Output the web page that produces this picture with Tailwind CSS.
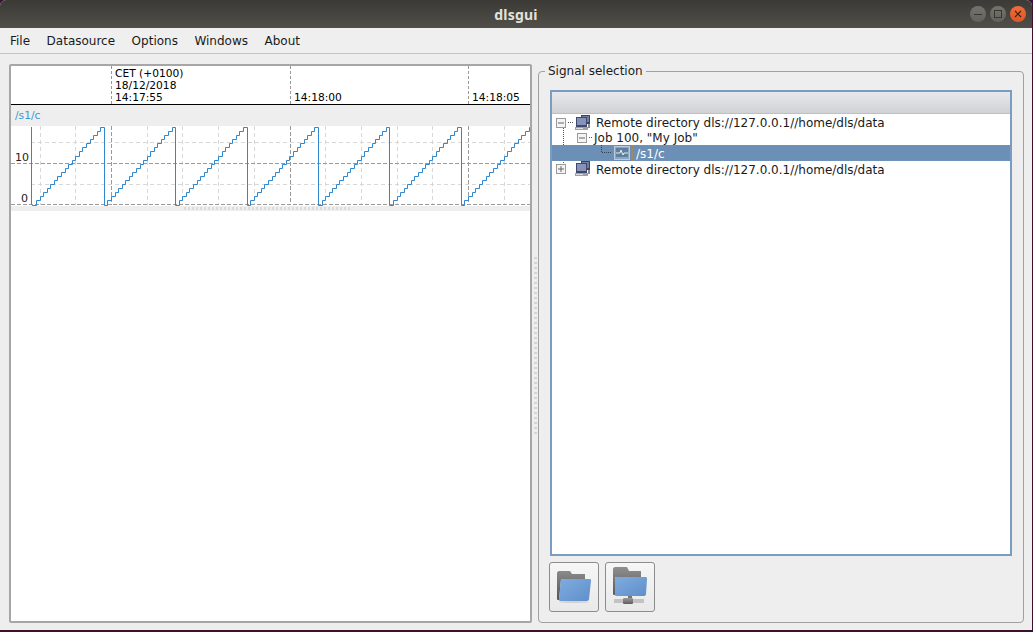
<!DOCTYPE html>
<html lang="en">
<head>
    <meta charset="UTF-8">
    <title>dlsgui</title>
    <script src="https://cdn.jsdelivr.net/npm/@tailwindcss/browser@4"></script>
</head>
<body class="bg-[#3a1230] w-[1033px] h-[632px] overflow-hidden font-['DejaVu_Sans',sans-serif] text-[12px] text-[#1a1a1a]">
    <div class="w-[1032px] h-[630px] flex flex-col bg-[#eeeeee] rounded-t-[6px] overflow-hidden">
        <!-- Title bar -->
        <div class="relative h-[28px] shrink-0 flex items-center justify-center bg-gradient-to-b from-[#3b3a36] to-[#504f49]">
            <span class="font-['Noto_Sans',sans-serif] font-bold text-[14px] tracking-[0.2px] text-[#e4e2dc]">dlsgui</span>
            <div class="absolute right-[6px] top-[6px] flex gap-[4px]">
                <div class="w-[16px] h-[16px] rounded-full bg-gradient-to-b from-[#74736e] to-[#62615c] flex items-center justify-center">
                    <div class="w-[8px] h-[1px] bg-[#38372f]"></div>
                </div>
                <div class="w-[16px] h-[16px] rounded-full bg-gradient-to-b from-[#74736e] to-[#62615c] flex items-center justify-center">
                    <div class="w-[8px] h-[8px] border border-[#38372f]"></div>
                </div>
                <div class="w-[16px] h-[16px] rounded-full bg-gradient-to-b from-[#ef6d3a] to-[#dd5526] flex items-center justify-center">
                    <svg width="8" height="8" viewBox="0 0 8 8"><path d="M1 1L7 7M7 1L1 7" stroke="#3b2416" stroke-width="1.2"/></svg>
                </div>
            </div>
        </div>

        <!-- Menu bar -->
        <div class="h-[26px] shrink-0 flex items-center pl-[10px] gap-[16.5px] border-b border-[#c4c4c4] bg-[#efefef]">
            <span>File</span>
            <span>Datasource</span>
            <span>Options</span>
            <span>Windows</span>
            <span>About</span>
        </div>

        <div class="flex-1 flex pl-[9px] pt-[10px] pb-[7px] min-h-0">
            <!-- Graph panel -->
            <div class="w-[523px] flex flex-col bg-white border-2 border-[#a6a6a6] rounded-[2px]">
                <div class="relative h-[39px] shrink-0 border-b border-black text-[10.67px] leading-[12px] text-black">
                    <div class="absolute left-[100px] top-0 bottom-0 border-l border-dashed border-[#999999]"></div>
                    <div class="absolute left-[279px] top-0 bottom-0 border-l border-dashed border-[#999999]"></div>
                    <div class="absolute left-[457px] top-0 bottom-0 border-l border-dashed border-[#999999]"></div>
                    <div class="absolute left-[104px] top-[1.5px]">CET (+0100)<br>18/12/2018<br>14:17:55</div>
                    <div class="absolute left-[283px] top-[25.5px]">14:18:00</div>
                    <div class="absolute left-[461px] top-[25.5px]">14:18:05</div>
                </div>
                <div class="h-[21px] shrink-0 bg-[#eeeeee] pl-[4px] pt-[4px] text-[10.67px] leading-[14px] text-[#3f97d6]">/s1/c</div>
                <svg class="block shrink-0" width="519" height="80" viewBox="11 126 519 80">
                    <g stroke="#d8d8d8" stroke-width="1" stroke-dasharray="4 3" fill="none">
                        <path d="M40.5 126V205M75.5 126V205M147.5 126V205M182.5 126V205M218.5 126V205M254.5 126V205M325.5 126V205M361.5 126V205M397.5 126V205M432.5 126V205M504.5 126V205"/>
                        <path d="M31 142.5H530M31 184.5H530"/>
                    </g>
                    <g stroke="#9a9a9a" stroke-width="1" stroke-dasharray="4 2" fill="none">
                        <path d="M111.5 126V205M290.5 126V205M468.5 126V205"/>
                        <path d="M11 163.5H530M11 204.5H530"/>
                    </g>
                    <path id="trace" fill="none" stroke="#2f87cf" stroke-width="1"/>
                    <text x="15" y="161" font-size="11" fill="#222">10</text>
                    <text x="21" y="202" font-size="11" fill="#222">0</text>
                </svg>
                <div class="relative h-[5px] shrink-0 bg-[#eeeeee]">
                    <div class="absolute left-[173px] top-[1px] w-[168px] h-[3px] bg-[repeating-linear-gradient(90deg,#dcdcdc_0,#dcdcdc_2px,transparent_2px,transparent_4px)]"></div>
                </div>
                <div class="flex-1 bg-white"></div>
            </div>

            <!-- Splitter -->
            <div class="w-[6px] shrink-0 flex items-center justify-center">
                <div class="w-[3px] h-[180px] bg-[repeating-linear-gradient(0deg,#d4d4d4_0,#d4d4d4_2px,transparent_2px,transparent_5px)]"></div>
            </div>

            <!-- Signal selection -->
            <div class="relative w-[486px] mt-[7px] border border-[#a0a0a0] rounded-[4px] px-[11px] pt-[18px] pb-[10px] flex flex-col">
                <div class="absolute left-[6px] -top-[8px] bg-[#eeeeee] px-[3px] leading-[14px] text-[12px]">Signal selection</div>
                <div class="relative h-[466px] shrink-0 bg-white border-2 border-[#7a9cc0]">
                    <div class="h-[22px] bg-gradient-to-b from-[#e8e9ec] to-[#d0d1d5] border-b border-[#c0c0c0]"></div>

                    <svg class="absolute left-[2px] top-[22px]" width="70" height="70" viewBox="552 114 70 70">
                        <path d="M561.5 128V165" stroke="#555" stroke-dasharray="1 1" fill="none"/>
                        <path d="M566 122.5H571M587 137.5H591" stroke="#555" stroke-dasharray="1 1" fill="none"/>
                    </svg>

                    <div class="relative mt-[1px] leading-[15px]">
                        <div class="relative h-[15px] pl-[44px] pt-[1px]">
                            <svg class="absolute left-[4px] top-[3px]" width="10" height="10" viewBox="0 0 10 10"><rect x="0.5" y="0.5" width="9" height="9" fill="#f4f4f4" stroke="#9a9a9a"/><path d="M2 5H8" stroke="#666"/></svg>
                            <svg class="absolute left-[22px] top-0" width="17" height="16" viewBox="0 0 17 16">
                                <rect x="7" y="0" width="9" height="9" fill="#3a4468"/><rect x="8" y="1" width="7" height="6" fill="#6f7ea8"/>
                                <rect x="2" y="2" width="11" height="10" fill="#3f496c"/><rect x="3" y="3" width="9" height="7" fill="#8792b8"/>
                                <rect x="1" y="12" width="13" height="3" fill="#a0a0a6"/><rect x="2" y="13" width="7" height="1" fill="#dedede"/>
                                <rect x="14" y="9" width="2" height="4" fill="#8a8a90"/>
                            </svg>
                            <span>Remote directory dls://127.0.0.1//home/dls/data</span>
                        </div>
                        <div class="relative h-[15px] pl-[42px] pt-[1px]">
                            <svg class="absolute left-[25px] top-[3px]" width="10" height="10" viewBox="0 0 10 10"><rect x="0.5" y="0.5" width="9" height="9" fill="#f4f4f4" stroke="#9a9a9a"/><path d="M2 5H8" stroke="#666"/></svg>
                            <span>Job 100, "My Job"</span>
                        </div>
                        <div class="relative h-[16px] pl-[83px] bg-[#6b8fb5] text-white">
                            <svg class="absolute left-[49px] top-0" width="12" height="9" viewBox="0 0 12 9"><path d="M0.5 0V7.5H11" stroke="#2f3f55" stroke-dasharray="1 1" fill="none"/></svg>
                            <svg class="absolute left-[62px] top-[1px]" width="16" height="14" viewBox="0 0 16 14">
                                <rect x="0.5" y="0.5" width="15" height="13" fill="#8ba7c4" stroke="#b9cbdc"/>
                                <rect x="2" y="2" width="12" height="9" fill="#5f7f9f"/>
                                <path d="M2 7H6L7 4L9 9L10 7H14" stroke="#e6eef5" fill="none"/>
                            </svg>
                            <span class="block h-[16px] -ml-[3px] pl-[3px] border border-dotted border-[#a98a60] leading-[16px]">/s1/c</span>
                        </div>
                        <div class="relative h-[16px] pl-[44px] pt-[2px]">
                            <svg class="absolute left-[4px] top-[3px]" width="10" height="10" viewBox="0 0 10 10"><rect x="0.5" y="0.5" width="9" height="9" fill="#f4f4f4" stroke="#9a9a9a"/><path d="M2 5H8M5 2V8" stroke="#666"/></svg>
                            <svg class="absolute left-[22px] top-0" width="17" height="16" viewBox="0 0 17 16">
                                <rect x="7" y="0" width="9" height="9" fill="#3a4468"/><rect x="8" y="1" width="7" height="6" fill="#6f7ea8"/>
                                <rect x="2" y="2" width="11" height="10" fill="#3f496c"/><rect x="3" y="3" width="9" height="7" fill="#8792b8"/>
                                <rect x="1" y="12" width="13" height="3" fill="#a0a0a6"/><rect x="2" y="13" width="7" height="1" fill="#dedede"/>
                                <rect x="14" y="9" width="2" height="4" fill="#8a8a90"/>
                            </svg>
                            <span>Remote directory dls://127.0.0.1//home/dls/data</span>
                        </div>
                    </div>
                </div>

                <div class="flex gap-[6px] mt-[6px] -ml-[1px]">
                    <div class="w-[50px] h-[50px] rounded-[3px] border border-[#8c8c8c] bg-gradient-to-b from-[#f6f6f6] to-[#e9e9e9] flex items-center justify-center">
                        <svg width="36" height="32" viewBox="0 0 36 32">
                            <defs>
                                <linearGradient id="backA" x1="0" y1="0" x2="0" y2="1"><stop offset="0" stop-color="#8a8a8a"/><stop offset="1" stop-color="#555555"/></linearGradient>
                                <linearGradient id="blueA" x1="0" y1="0" x2="1" y2="1"><stop offset="0" stop-color="#7fabdf"/><stop offset="1" stop-color="#5f8fca"/></linearGradient>
                            </defs>
                            <path d="M1 2C1 1 2 0 3 0H14L16 3H29V9H5L3 29H2C1 29 1 28 1 27Z" fill="url(#backA)"/>
                            <path d="M5 8H34C35 8 35 9 35 10L33 28C33 29 32 30 31 30H4C3 30 3 29 3 28Z" fill="url(#blueA)"/>
                            <ellipse cx="18" cy="31" rx="15" ry="1" fill="#d2d2d2"/>
                        </svg>
                    </div>
                    <div class="w-[50px] h-[50px] rounded-[3px] border border-[#8c8c8c] bg-gradient-to-b from-[#f6f6f6] to-[#e9e9e9] flex items-center justify-center">
                        <svg width="36" height="40" viewBox="0 0 36 40">
                            <defs>
                                <linearGradient id="backB" x1="0" y1="0" x2="0" y2="1"><stop offset="0" stop-color="#8f8f8f"/><stop offset="1" stop-color="#5a5a5a"/></linearGradient>
                                <linearGradient id="blueB" x1="0" y1="0" x2="1" y2="1"><stop offset="0" stop-color="#7fabdf"/><stop offset="1" stop-color="#5f8fca"/></linearGradient>
                                <linearGradient id="hub" x1="0" y1="0" x2="0" y2="1"><stop offset="0" stop-color="#9a9a9a"/><stop offset="1" stop-color="#5f5f5f"/></linearGradient>
                            </defs>
                            <path d="M1 2C1 1 2 0 3 0H15L17 4H29V10H3V28H2C1 28 1 27 1 26Z" fill="url(#backB)"/>
                            <path d="M4 10H34C35 10 35 11 35 12L34 27C34 28 33 29 32 29H4C3 29 3 28 3 27V11C3 10 3 10 4 10Z" fill="url(#blueB)"/>
                            <rect x="16" y="29" width="4" height="3" fill="#777777"/>
                            <path d="M2 33H32M2 35H32" stroke="#9a9a9a"/>
                            <rect x="11" y="31" width="10" height="6" rx="1" fill="url(#hub)"/>
                        </svg>
                    </div>
                </div>
            </div>
        </div>
    </div>

    <script>
        // Sawtooth trace, 20 steps per period
        const stepW = 3.57, unit = 4.08, base = 204.5, left = 31.5, right = 530;
        let d = `M${left} 127 L${left} ${base}`;
        for (let k = 0; k < 7; k++) {
            const start = 32.4 + k * 71.4;
            for (let i = 0; i < 20; i++) {
                const x0 = start + i * stepW;
                const x1 = x0 + stepW;
                if (x0 > right) continue;
                const y = Math.round(base - i * unit) + 0.5;
                d += ` L${Math.round(x0) + 0.5} ${y} L${Math.min(Math.round(x1) + 0.5, right)} ${y}`;
            }
        }
        document.getElementById('trace').setAttribute('d', d);
    </script>
</body>
</html>
